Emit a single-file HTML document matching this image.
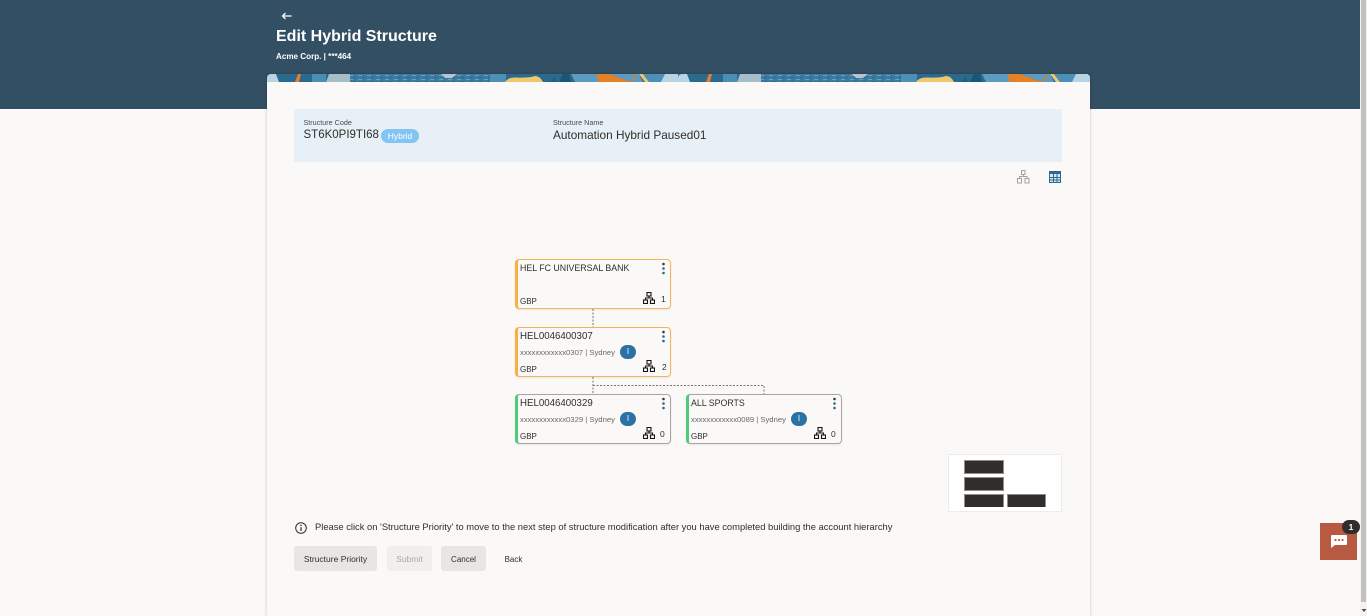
<!DOCTYPE html>
<html lang="en"><head><meta charset="utf-8"><title>Edit Hybrid Structure</title>
<style>
html,body{margin:0;padding:0;width:1367px;height:616px;overflow:hidden;background:#fbf9f8;font-family:"Liberation Sans",sans-serif;color:#312d2a}
.a{position:absolute;white-space:nowrap}
#hdr{left:0;top:0;width:1360px;height:109px;background:#324f63}
#card{left:267px;top:74px;width:823px;height:542px;background:#fbf9f8;border-radius:4px 4px 0 0;box-shadow:0 0 3px rgba(0,0,0,.22);overflow:hidden}
.node{position:absolute;width:152px;height:48px;border:1px solid #f5b556;border-left:3px solid #f9b03f;border-radius:4px;background:#fbf9f8;box-shadow:0 1px 2px rgba(0,0,0,.08)}
.g{border-color:#a8a6a4;border-left-color:#4fcb7c}
.t{position:absolute;left:2px;top:2px;font-size:9.700px;line-height:13px;color:#312d2a;white-space:nowrap}
.u{font-size:8.800px}
.s{position:absolute;left:2px;top:19px;font-size:7.680px;line-height:11px;color:#6b6765;white-space:nowrap}
.c{position:absolute;left:2px;top:37px;font-size:8px;line-height:10px;color:#312d2a}
.b{position:absolute;left:102px;top:17px;width:16px;height:14px;border-radius:8px;background:#2a72a5;color:#fff;font-size:8px;line-height:14px;text-align:center}
.n{position:absolute;left:143px;top:34px;font-size:8.500px;line-height:11px;color:#312d2a}
.m{position:absolute;left:144px;top:2px;width:3px;height:13px}
.h{position:absolute;left:125px;top:32px}
.btn{position:absolute;top:546px;height:25px;border-radius:3px;font-size:8.500px;line-height:26px;text-align:center;background:#e8e6e4;color:#312d2a}
.mm{position:absolute;background:#312d2a;border:1px solid #8f8c89;box-sizing:border-box;height:14px;width:40px}
</style></head><body>
<div class="a" id="hdr"></div>
<svg class="a" style="left:281px;top:11px" width="11" height="10" viewBox="0 0 11 10"><path d="M10.500 5H1.500M4.500 2L1.500 5L4.500 8" fill="none" stroke="#fff" stroke-width="1.300"/></svg>
<div class="a" style="left:276px;top:27px;font-size:16px;line-height:20px;font-weight:bold;color:#fff">Edit Hybrid Structure</div>
<div class="a" style="left:276px;top:51px;font-size:8.100px;line-height:12px;font-weight:bold;color:#fff">Acme Corp. | ***464</div>
<div class="a" id="card">
<svg width="823" height="8" viewBox="0 0 823 8" style="position:absolute;left:0;top:0;display:block">
<defs><pattern id="dash" width="9" height="4" patternUnits="userSpaceOnUse"><rect width="9" height="4" fill="#3b7aa2"/><rect x="1" y="1" width="4" height="1" fill="#6a9fbe"/><rect x="5" y="3" width="3" height="1" fill="#2c6789"/></pattern>
<g id="tile">
<rect x="0" y="0" width="412" height="8" fill="#2a6a8e"/>
<path d="M0 8V3Q1 0 4 0H9L12 8Z" fill="#b6d4e4"/>
<path d="M28 8L31 0H34L32 8Z" fill="#e58125"/>
<rect x="45" y="0" width="14" height="8" fill="#4a8db5"/>
<path d="M59 8L62 0H83V8Z" fill="#a8bdca"/>
<rect x="83" y="0" width="140" height="8" fill="url(#dash)"/>
<path d="M174 0H190L185 4H178Z" fill="#b5c4cd"/>
<rect x="223" y="0" width="16" height="8" fill="#4d90b7"/>
<path d="M238 8Q241 3 250 3.500Q262 4 268 2Q273 2 276 8Z" fill="#eec76e"/>
<path d="M283 8L288 2L290 8Z" fill="#245e83"/>
<path d="M292 8L296 0H302L304 8Z" fill="#1d5479"/>
<path d="M304 0H330L332 8H308Z" fill="#5c9cc2"/>
<path d="M330 0H342L364 8H331Z" fill="#e58125"/>
<path d="M342 0H372L376 8H364Z" fill="#5c9cc2"/>
<path d="M363 8L369 0H370.500L365 8Z" fill="#d37f2e"/>
<path d="M372 0H376L382 8H378Z" fill="#eec76e"/>
<path d="M376 0H398L396 8H382Z" fill="#4d90b7"/>
<path d="M398 0H412V8H394Z" fill="#b6d4e4"/>
</g></defs>
<use href="#tile"/><use href="#tile" x="411"/>
<path d="M818 0H823V8H811Z" fill="#b6d4e4"/>
</svg>
</div>
<div class="a" style="left:294px;top:109px;width:768px;height:53px;background:#e6f0f6"></div>
<div class="a" style="left:303.500px;top:118px;font-size:7.200px;line-height:10px;color:#4d4a48">Structure Code</div>
<div class="a" style="left:303.500px;top:128px;font-size:11.500px;line-height:15px;color:#312d2a">ST6K0PI9TI68</div>
<div class="a" style="left:381px;top:129px;width:38px;height:14px;border-radius:7px;background:#82c5f2;color:#fff;font-size:8.500px;line-height:15px;text-align:center">Hybrid</div>
<div class="a" style="left:553px;top:118px;font-size:7.200px;line-height:10px;color:#4d4a48">Structure Name</div>
<div class="a" style="left:553px;top:128px;font-size:11.800px;line-height:15px;color:#312d2a">Automation Hybrid Paused01</div>
<svg class="a" style="left:1017px;top:170px" width="13" height="14" viewBox="0 0 13 14" fill="none" stroke="#a5a19e" stroke-width="1"><rect x="4.500" y=".5" width="3.500" height="4"/><rect x=".5" y="8.500" width="4" height="4.500"/><rect x="8" y="8.500" width="4" height="4.500"/><path d="M6.500 4.500V6.500M2.500 8.500V6.500H10V8.500"/></svg>
<svg class="a" style="left:1049px;top:171px" width="12" height="12" viewBox="0 0 12 12"><rect width="12" height="12" fill="#dbe6ec"/><rect x=".5" y=".5" width="11" height="11" fill="none" stroke="#2a6a92"/><rect x="0" y="0" width="12" height="3" fill="#2a6a92"/><path d="M4.500 3V12M8 3V12M0 6.500H12M0 9H12" stroke="#2a6a92"/></svg>
<svg class="a" style="left:500px;top:300px" width="280" height="100" fill="none" stroke="#77736f" stroke-width="1" stroke-dasharray="2 1.500"><path d="M93 9V27M93 77V94M93 85.500H264V94"/></svg>

<div class="node" style="left:515px;top:259px"><div class="t u">HEL FC UNIVERSAL BANK</div><div class="c">GBP</div><svg class="m" viewBox="0 0 3 13"><circle cx="1.500" cy="2" r="1.300" fill="#263f4f"/><circle cx="1.500" cy="6.500" r="1.300" fill="#2a6a82"/><circle cx="1.500" cy="11" r="1.300" fill="#2a6a82"/></svg><svg class="h" width="12" height="12" viewBox="0 0 12 12" fill="none" stroke="#161513" stroke-width="1.100"><rect x="4" y=".5" width="4" height="3.500"/><rect x=".5" y="8" width="4" height="3.500"/><rect x="7.500" y="8" width="4" height="3.500"/><path d="M6 4V6H2.500V8M6 6H9.500V8"/></svg><div class="n">1</div></div>

<div class="node" style="left:515px;top:327px"><div class="t">HEL0046400307</div><div class="s">xxxxxxxxxxxx0307 | Sydney</div><div class="b">I</div><div class="c">GBP</div><svg class="m" viewBox="0 0 3 13"><circle cx="1.500" cy="2" r="1.300" fill="#263f4f"/><circle cx="1.500" cy="6.500" r="1.300" fill="#2a6a82"/><circle cx="1.500" cy="11" r="1.300" fill="#2a6a82"/></svg><svg class="h" width="12" height="12" viewBox="0 0 12 12" fill="none" stroke="#161513" stroke-width="1.100"><rect x="4" y=".5" width="4" height="3.500"/><rect x=".5" y="8" width="4" height="3.500"/><rect x="7.500" y="8" width="4" height="3.500"/><path d="M6 4V6H2.500V8M6 6H9.500V8"/></svg><div class="n" style="left:144px">2</div></div>

<div class="node g" style="left:515px;top:394px"><div class="t">HEL0046400329</div><div class="s">xxxxxxxxxxxx0329 | Sydney</div><div class="b">I</div><div class="c">GBP</div><svg class="m" viewBox="0 0 3 13"><circle cx="1.500" cy="2" r="1.300" fill="#263f4f"/><circle cx="1.500" cy="6.500" r="1.300" fill="#2a6a82"/><circle cx="1.500" cy="11" r="1.300" fill="#2a6a82"/></svg><svg class="h" width="12" height="12" viewBox="0 0 12 12" fill="none" stroke="#161513" stroke-width="1.100"><rect x="4" y=".5" width="4" height="3.500"/><rect x=".5" y="8" width="4" height="3.500"/><rect x="7.500" y="8" width="4" height="3.500"/><path d="M6 4V6H2.500V8M6 6H9.500V8"/></svg><div class="n" style="left:142px">0</div></div>

<div class="node g" style="left:686px;top:394px"><div class="t u">ALL SPORTS</div><div class="s">xxxxxxxxxxxx0089 | Sydney</div><div class="b">I</div><div class="c">GBP</div><svg class="m" viewBox="0 0 3 13"><circle cx="1.500" cy="2" r="1.300" fill="#263f4f"/><circle cx="1.500" cy="6.500" r="1.300" fill="#2a6a82"/><circle cx="1.500" cy="11" r="1.300" fill="#2a6a82"/></svg><svg class="h" width="12" height="12" viewBox="0 0 12 12" fill="none" stroke="#161513" stroke-width="1.100"><rect x="4" y=".5" width="4" height="3.500"/><rect x=".5" y="8" width="4" height="3.500"/><rect x="7.500" y="8" width="4" height="3.500"/><path d="M6 4V6H2.500V8M6 6H9.500V8"/></svg><div class="n" style="left:142px">0</div></div>

<div class="a" style="left:948px;top:454px;width:114px;height:58px;background:#fff;border:1px solid #eeecea;box-sizing:border-box"></div>
<div class="mm" style="left:964px;top:460px"></div>
<div class="mm" style="left:964px;top:477px"></div>
<div class="mm" style="left:964px;top:494px;height:13px;border-bottom:0"></div>
<div class="mm" style="left:1007px;top:494px;height:13px;width:39px;border-bottom:0"></div>

<svg class="a" style="left:295px;top:522px" width="12" height="12" viewBox="0 0 12 12" fill="none" stroke="#312d2a"><circle cx="6" cy="6" r="5.300"/><path d="M6 5.200V9" stroke-width="1.200"/><circle cx="6" cy="3.400" r=".8" fill="#312d2a" stroke="none"/></svg>
<div class="a" style="left:315px;top:520px;font-size:9.370px;line-height:14px;color:#312d2a">Please click on 'Structure Priority' to move to the next step of structure modification after you have completed building the account hierarchy</div>

<div class="btn" style="left:294px;width:83px">Structure Priority</div>
<div class="btn" style="left:387px;width:45px;background:#f1efed;color:#aaa7a4">Submit</div>
<div class="btn" style="left:441px;width:45px;font-size:8px;line-height:27px">Cancel</div>
<div class="btn" style="left:491px;width:45px;background:none;font-size:8px;line-height:27px">Back</div>

<div class="a" style="left:1320px;top:523px;width:37px;height:37px;background:#b85a42"></div>
<svg class="a" style="left:1331px;top:535px" width="16" height="14" viewBox="0 0 16 14"><path d="M1 0H15Q16 0 16 1V9Q16 10 15 10H4L0 13V1Q0 0 1 0Z" fill="#fff"/><circle cx="4.500" cy="5" r="1.100" fill="#b85a42"/><circle cx="8" cy="5" r="1.100" fill="#b85a42"/><circle cx="11.500" cy="5" r="1.100" fill="#b85a42"/></svg>
<div class="a" style="left:1342px;top:520px;width:18px;height:14px;border-radius:7px;background:#312d2a;color:#fff;font-size:8.500px;font-weight:bold;line-height:14px;text-align:center">1</div>

<div class="a" style="left:1360px;top:0;width:7px;height:616px;background:#f4f3f2"></div>
<div class="a" style="left:1361px;top:0;width:5px;height:602px;background:#c1c1c1"></div>
<svg class="a" style="left:1361px;top:609px" width="6" height="4"><path d="M.5 0H5.500L3 3Z" fill="#505050"/></svg>
</body></html>
